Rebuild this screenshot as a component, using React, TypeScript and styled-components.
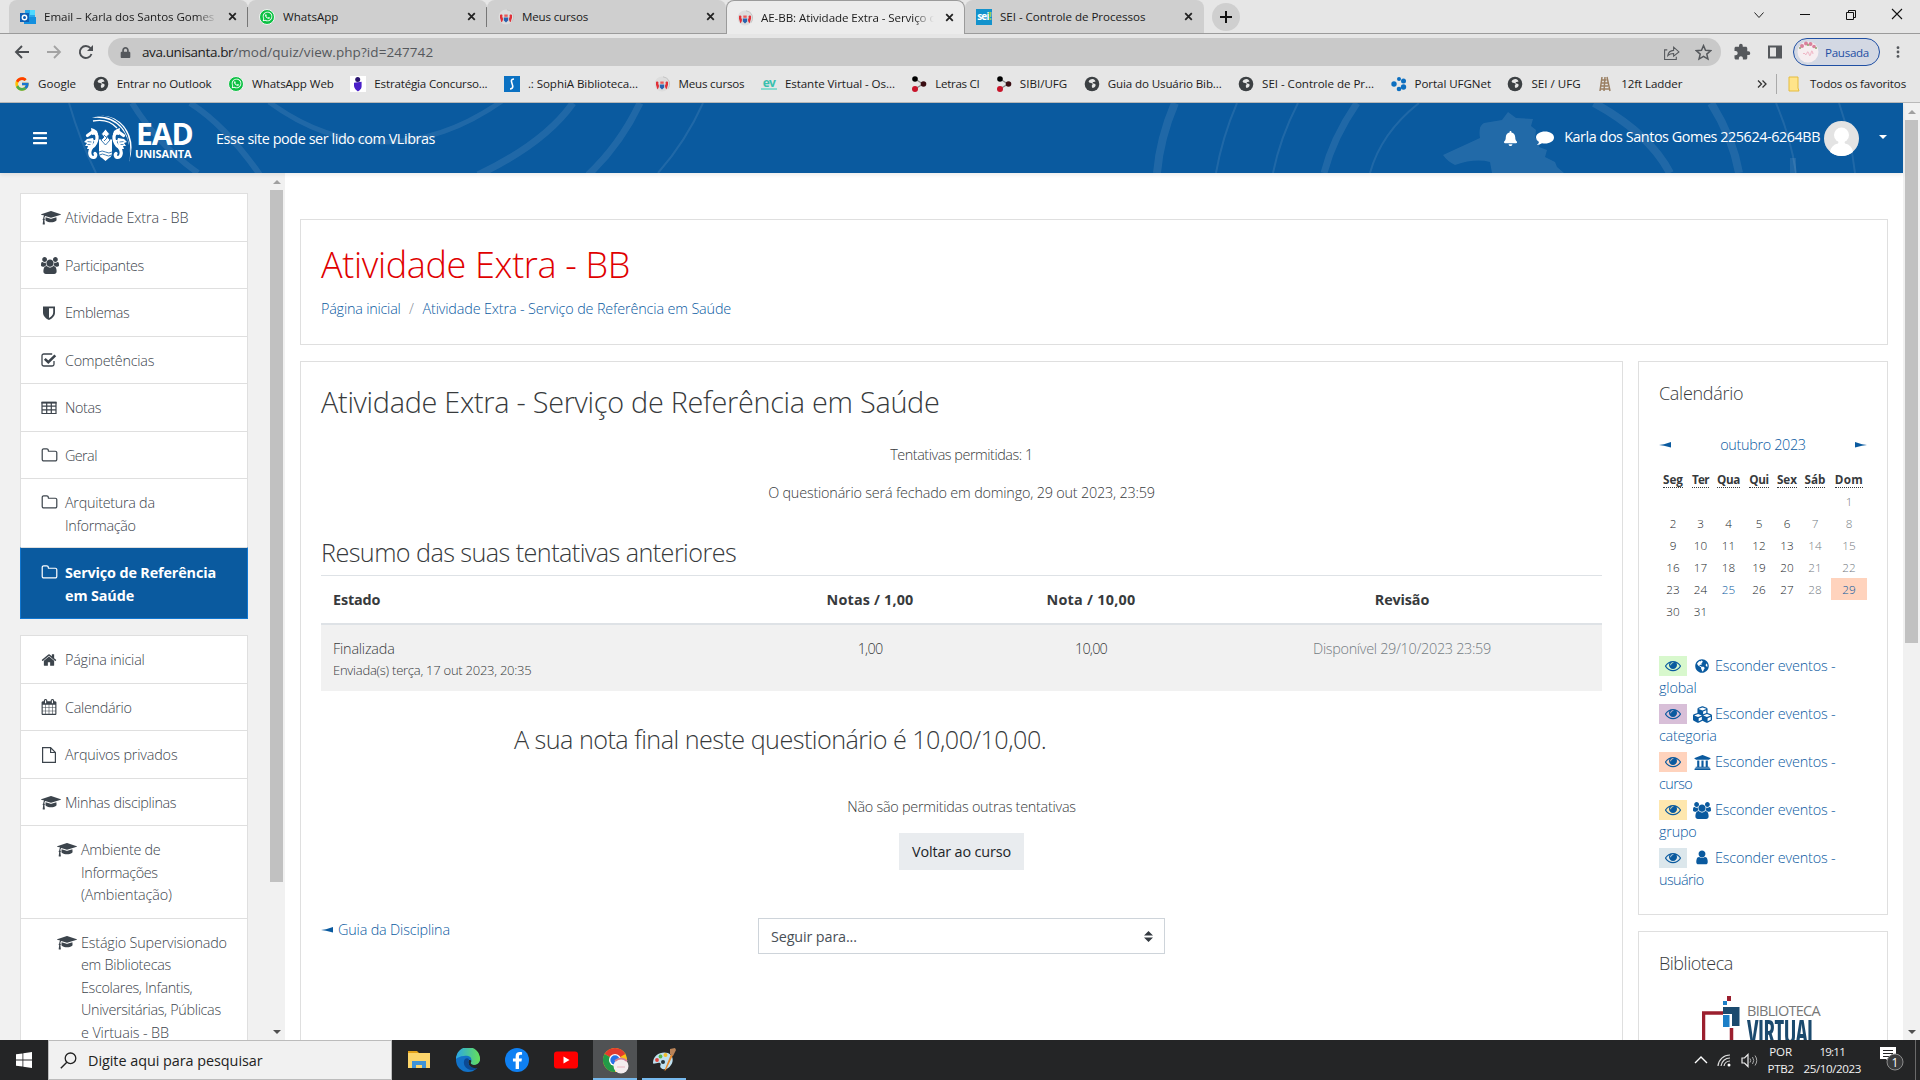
import React, { useLayoutEffect, useRef, useState } from 'react';
import styled, { createGlobalStyle, css } from 'styled-components';
import {
  FaBars, FaBell, FaCubes, FaUniversity, FaGlobeAmericas, FaWhatsapp, FaLock, FaFacebookF,
} from 'react-icons/fa';
import { MdExtension } from 'react-icons/md';
import { FcGoogle } from 'react-icons/fc';

const GlobalStyle = createGlobalStyle`
  * { box-sizing: border-box; }
  body { margin: 0; background: #fff; overflow: hidden; }
  svg { display: block; flex: none; }
`;

const BLUE = '#0a5a9f';
const LINE = '#dfdfdf';

/* ---------- text ---------- */

const Run = styled.span<{ $spacing: number }>`
  display: inline-block;
  justify-self: start;
  white-space: pre;
  letter-spacing: ${p => p.$spacing}px;
`;

/* A run of text whose tracking is adjusted so that it takes a given width. */
function Fit({ w, children }: { w: number; children: string }) {
  const ref = useRef<HTMLSpanElement>(null);
  const [spacing, setSpacing] = useState(0);
  useLayoutEffect(() => {
    if (ref.current) setSpacing((w - ref.current.offsetWidth) / children.length);
  }, [w, children]);
  return <Run ref={ref} $spacing={spacing}>{children}</Run>;
}

/* ---------- icons ---------- */

const Svg = ({ s = 16, h, vb = '0 0 16 16', children }: any) => (
  <svg width={s} height={h ?? s} viewBox={vb} fill="currentColor">{children}</svg>
);

const GradCap = () => (
  <Svg s={20} h={15} vb="0 0 2304 1728"><path d="M1774 836l18 316q4 69-82 128t-235 93.5-323 34.5-323-34.5-235-93.5-82-128l18-316 574 181q22 7 48 7t48-7zm530-324q0 23-22 31l-1120 352q-4 1-10 1t-10-1l-652-206q-43 34-71 111.5t-34 178.5q63 36 63 109 0 69-58 107l58 433q2 14-8 25-9 11-24 11h-192q-15 0-24-11-10-11-8-25l58-433q-58-38-58-107 0-73 65-111 11-207 98-330l-333-104q-22-8-22-31t22-31l1120-352q4-1 10-1t10 1l1120 352q22 8 22 31z" /></Svg>
);
const UsersIcon = () => (
  <Svg s={18} h={17} vb="0 0 1920 1792"><path d="M593 896q-162 5-265 128h-134q-82 0-138-40.5t-56-118.5q0-353 124-353 6 0 43.5 21t97.5 42.5 119 21.5q67 0 133-23-5 37-5 66 0 139 81 256zm1071 637q0 120-73 189.5t-194 69.5h-874q-121 0-194-69.5t-73-189.5q0-53 3.5-103.5t14-109 26.5-108.5 43-97.5 62-81 85.500-53.5 111.5-20q10 0 43 21.5t73 48 107 48 135 21.5 135-21.5 107-48 73-48 43-21.5q61 0 111.5 20t85.500 53.5 62 81 43 97.5 26.500 108.5 14 109 3.500 103.5zm-1024-1277q0 106-75 181t-181 75-181-75-75-181 75-181 181-75 181 75 75 181zm704 384q0 159-112.5 271.5t-271.5 112.5-271.5-112.5-112.5-271.5 112.5-271.5 271.5-112.5 271.5 112.5 112.5 271.5zm576 225q0 78-56 118.5t-138 40.5h-134q-103-123-265-128 81-117 81-256 0-29-5-66 66 23 133 23 59 0 119-21.5t97.5-42.5 43.500-21q124 0 124 353zm-128-609q0 106-75 181t-181 75-181-75-75-181 75-181 181-75 181 75 75 181z" /></Svg>
);
const UserIcon = () => (
  <Svg s={16} vb="0 60 1792 1792"><path d="M1536 1399q0 109-62.5 187t-150.5 78h-854q-88 0-150.5-78t-62.5-187q0-85 8.5-160.5t31.5-152 58.5-131 94-89 134.5-34.5q131 128 313 128t313-128q76 0 134.5 34.5t94 89 58.5 131 31.5 152 8.5 160.5zm-256-887q0 159-112.5 271.5t-271.5 112.5-271.5-112.5-112.5-271.5 112.5-271.5 271.5-112.5 271.5 112.5 112.5 271.5z" /></Svg>
);
const ShieldIcon = () => <Svg><path d="M2 1.500h12v6c0 4-3.500 6.300-6 7.500-2.500-1.200-6-3.500-6-7.500zM8 3.300v9.600c2-1.100 4.200-2.600 4.200-5.400V3.300z" fillRule="evenodd" /></Svg>;
const HomeIcon = () => (
  <Svg vb="0 0 1792 1792"><path d="M1472 992v480q0 26-19 45t-45 19h-384v-384h-256v384h-384q-26 0-45-19t-19-45v-480q0-1 .5-3t.5-3l575-474 575 474q1 2 1 6zm223-69l-62 74q-8 9-21 11h-3q-13 0-21-7l-692-577-692 577q-12 8-24 7-13-2-21-11l-62-74q-8-10-7-23.5t11-21.5l719-599q32-26 76-26t76 26l244 204v-195q0-14 9-23t23-9h192q14 0 23 9t9 23v408l219 182q10 8 11 21.5t-7 23.5z" /></Svg>
);
const FolderIcon = () => (
  <Svg s={17} h={17} vb="0 0 1792 1792"><path d="M1600 1312v-704q0-40-28-68t-68-28h-704q-40 0-68-28t-28-68v-64q0-40-28-68t-68-28h-320q-40 0-68 28t-28 68v960q0 40 28 68t68 28h1216q40 0 68-28t28-68zm128-704v704q0 92-66 158t-158 66h-1216q-92 0-158-66t-66-158v-960q0-92 66-158t158-66h320q92 0 158 66t66 158v32h672q92 0 158 66t66 158z" /></Svg>
);
const CalendarIcon = () => (
  <Svg s={16} h={16} vb="0 0 1792 1792"><path d="M192 1664h288v-288h-288v288zm352 0h320v-288h-320v288zm-352-352h288v-320h-288v320zm352 0h320v-320h-320v320zm-352-384h288v-288h-288v288zm736 736h320v-288h-320v288zm-384-736h320v-288h-320v288zm768 736h288v-288h-288v288zm-384-352h320v-320h-320v320zm-352-864v-288q0-13-9.5-22.5t-22.5-9.5h-64q-13 0-22.5 9.5t-9.5 22.5v288q0 13 9.5 22.5t22.5 9.5h64q13 0 22.5-9.5t9.5-22.5zm736 864h288v-320h-288v320zm-384-384h320v-288h-320v288zm384 0h288v-288h-288v288zm32-480v-288q0-13-9.5-22.5t-22.5-9.5h-64q-13 0-22.5 9.5t-9.5 22.5v288q0 13 9.5 22.5t22.5 9.5h64q13 0 22.5-9.5t9.5-22.5zm384-64v1280q0 52-38 90t-90 38h-1408q-52 0-90-38t-38-90v-1280q0-52 38-90t90-38h128v-96q0-66 47-113t113-47h64q66 0 113 47t47 113v96h384v-96q0-66 47-113t113-47h64q66 0 113 47t47 113v96h128q52 0 90 38t38 90z" /></Svg>
);
const EyeIcon = () => (
  <Svg s={16} vb="0 60 1792 1792"><path d="M1664 960q-152-236-381-353 61 104 61 225 0 185-131.5 316.5t-316.5 131.5-316.5-131.5-131.5-316.5q0-121 61-225-229 117-381 353 133 205 333.5 326.5t434.5 121.5 434.5-121.5 333.5-326.5zm-720-384q0-20-14-34t-34-14q-125 0-214.5 89.5t-89.5 214.5q0 20 14 34t34 14 34-14 14-34q0-86 61-147t147-61q20 0 34-14t14-34zm848 384q0 34-20 69-140 230-376.5 368.5t-499.5 138.5-499.5-139-376.5-368q-20-35-20-69t20-69q140-229 376.5-368t499.5-139 499.5 139 376.5 368q20 35 20 69z" /></Svg>
);
const CheckIcon = () => (
  <Svg><g fill="none" stroke="currentColor"><path d="M13 9v3.2a1.8 1.8 0 0 1-1.8 1.8H2.8A1.8 1.8 0 0 1 1 12.2V3.8A1.8 1.8 0 0 1 2.8 2h8.4" strokeWidth="1.3" /><path d="M3.800 6.800L7.300 10.200L14.300 3.300" strokeWidth="2.5" /></g></Svg>
);
const TableIcon = () => (
  <Svg><path fill="none" stroke="currentColor" strokeWidth="1.2" d="M1 2.500h14v11H1zM1 6.200h14M1 9.800h14M5.700 3v10.500M10.300 3v10.500" /><path d="M.5 1.600h15v2H.5z" /></Svg>
);
const FileIcon = () => <Svg s={16}><path fill="none" stroke="currentColor" strokeWidth="1.2" d="M1.600.7h8l4.800 4.800v9.800H1.600zM9.600.7v4.800h4.800" /></Svg>;

const GlobeFav = () => (
  <Svg><circle cx="8" cy="8" r="7.3" fill="#3c4043" /><path d="M8.600 3c-2 0-3.600 1-4 2.600.6 1.600 2.200 1.400 3.400 1.600.9.200.7 1.500 0 2-.6.600.2 1.500 0 2.600 1.500.3 3.200-.7 3.600-2.300.3-1.200-.8-1.900-2-2-1-.1-1.300-1-.4-1.500.8-.4 1.700-.1 2.300-.6C11 4 10 3 8.600 3z" fill="#e6e6e6" /></Svg>
);
const WaBadge = styled.span`
  display: flex; align-items: center; justify-content: center;
  width: 16px; height: 16px; border-radius: 50%;
  background: #0cc143; color: #fff; border: 1px solid #f4f4f4;
`;
const WaFav = () => <WaBadge><FaWhatsapp size={11} /></WaBadge>;
const CrestFav = () => (
  <Svg><circle cx="8" cy="8" r="7.5" fill="#ddd" /><path d="M9 .8a7.300 7.300 0 0 1 5 12" stroke="#c4c4c4" fill="none" /><path d="M2 6c2-1 3 0 2.200 2 1.400 1 .8 4-.6 5.200C2.500 12 2.800 10 2 9zM14 6c-2-1-3 0-2.200 2-1.400 1-.8 4 .6 5.200 1.100-1.200.8-3.200 1.600-4.200z" fill="#e03038" /><path d="M6.300 5.500h3.400v2.300H6.300z" fill="#e85a5a" /><path d="M5.800 8.500h4.400v3L8 13.500l-2.200-2z" fill="#2a62ad" /></Svg>
);
const OutlookFav = () => (
  <Svg><path fill="#28a8ea" d="M5 1h10v10H5z" /><path fill="#50d9ff" d="M10 1h5v5h-5z" /><path fill="#1490df" d="M4 8h12v7H4z" /><path fill="#0f5fb4" d="M0 4h9v9H0z" /><circle cx="4.500" cy="8.500" r="2.200" fill="none" stroke="#fff" strokeWidth="1.4" /></Svg>
);
const FavText = styled.span<{ $bg?: string; $fg: string; $size: number; $under?: boolean }>`
  display: flex; align-items: center; justify-content: center; flex: none;
  width: 16px; height: ${p => (p.$under ? 13 : 16)}px; overflow: hidden;
  background: ${p => p.$bg ?? 'transparent'}; color: ${p => p.$fg};
  font: 700 ${p => p.$size}px/11px "Open Sans", sans-serif; letter-spacing: -0.8px;
  ${p => p.$under && css`border-bottom: 2px solid #8ad9ce;`}
  b { color: #8fd14f; }
`;
const SeiFav = () => <FavText $bg="#1292cc" $fg="#fff" $size={10}>sei<b>!</b></FavText>;
const EvFav = () => <FavText $fg="#39c0ae" $size={12} $under>ev</FavText>;
const EstFav = () => <Svg><path fill="#fff" d="M0 0h16v16H0z" /><circle cx="7.700" cy="3.500" r="2.500" fill="#2a1570" /><path fill="#4a1fc8" d="M4 6.800l7.600-1v4.500c0 3-2.400 4.200-3.600 5.200C6.500 14.500 4 12 4 10z" /></Svg>;
const SophiaFav = () => <Svg><path fill="#0a71c2" d="M0 0h16v16H0z" /><path d="M10 3C7 3 7 5 8 7.500S9.500 13 6 13" stroke="#fff" strokeWidth="1.6" fill="none" /></Svg>;
const NodesFav = () => <Svg><path d="M4 3l8 5-8 5" stroke="#888" strokeWidth="1.3" fill="none" /><circle cx="4" cy="3" r="2.8" fill="#000" /><circle cx="12.500" cy="8" r="2.800" fill="#3a0d12" /><circle cx="4" cy="13" r="3" fill="#c8142a" /></Svg>;
const PortalFav = () => <Svg><g fill="#0d6fc0"><circle cx="3" cy="8" r="2.7" /><circle cx="8" cy="13" r="2.3" /><circle cx="12.500" cy="11" r="2.7" /><circle cx="12.500" cy="5" r="2.5" /><circle cx="8" cy="3" r="2" /></g></Svg>;
const LadderFav = () => <Svg><g stroke="#9a7f62" strokeWidth="1.5" fill="none"><path d="M5 1L3 15M8 1L7 15M10 1l3 14M4.500 4h5M4 7h7M4 10h7M3 13h9" /></g></Svg>;
const FolderFav = () => <Svg><path d="M3 1h9v11l1 3H3z" fill="#ffe48a" stroke="#e5bc3e" /></Svg>;

/* ---------- browser chrome ---------- */

const Screen = styled.div`
  width: 1920px; height: 1080px; overflow: hidden;
  display: flex; flex-direction: column;
  font-family: "Open Sans", "Noto Sans", sans-serif;
  color: #373a3c;
`;
const Chrome = styled.div`
  height: 103px; flex: none; background: #e6e6e6; border-bottom: 1px solid #b9b9b9;
  font-size: 11.6px; color: #1b1b1b;
`;
const TabStrip = styled.div`
  display: flex; height: 34px; border-bottom: 1px solid #9b9b9b; padding-left: 9px;
`;
const Tab = styled.div<{ $w: number; $active?: boolean; $sep?: boolean }>`
  display: flex; align-items: center; flex: none;
  width: ${p => p.$w}px; height: ${p => (p.$active ? 34 : 33)}px;
  padding: 0 8px 0 11px; gap: 8px;
  border-radius: 8px 8px 0 0;
  background: #cfcfcf;
  ${p => p.$active && css`background: #ececec; border: 1px solid #9b9b9b; border-bottom: 0; padding: 0 7px 0 10px;`}
  ${p => p.$sep && css`
    background: linear-gradient(#777, #777) right 7px / 1px 20px no-repeat, #cfcfcf;
  `}
`;
const TabTitle = styled.span<{ $fade?: boolean }>`
  flex: 1; overflow: hidden; white-space: nowrap;
  ${p => p.$fade && css`mask-image: linear-gradient(90deg, #000 88%, transparent);`}
`;
const NewTab = styled.span`
  display: flex; align-items: center; justify-content: center;
  width: 28px; height: 28px; margin: 3px 0 0 8px; border-radius: 50%; background: #cfcfcf; color: #111;
`;
const WindowButtons = styled.div`
  display: flex; margin-left: auto; padding: 7px 15px 0 0; gap: 30px; color: #111;
`;
const CloseX = () => <Svg s={15} vb="0 0 16 16"><path d="M4.500 4.500l7 7M11.500 4.500l-7 7" stroke="#222" strokeWidth="1.9" /></Svg>;

const Toolbar = styled.div`
  display: flex; align-items: center; height: 36px; padding: 0 13px 0 14px; color: #55585c;
`;
const NavButtons = styled.div`display: flex; gap: 16px; width: 94px; flex: none;`;
const Omnibox = styled.div`
  display: flex; align-items: center; width: 1613px; flex: none; height: 28px; border-radius: 14px;
  background: #c9c9c9; padding: 0 9px 0 12px; font-size: 13.5px; color: #55585c;
  b { font-weight: 400; color: #1b1b1b; }
`;
const UrlText = styled.span`margin-left: 11px; flex: 1;`;
const ToolIcons = styled.div`display: flex; align-items: center; gap: 16px; padding: 0 10px 0 12px;`;
const OmniIcons = styled.div`display: flex; gap: 15px;`;
const ProfilePill = styled.div`
  display: flex; align-items: center; gap: 6px; width: 87px; height: 28px; margin-right: 11px; padding-left: 3px;
  border: 1.5px solid #1f4fa3; border-radius: 14px; background: #d3d8e3; color: #1f4fa3;
`;
const Karla = () => (
  <Svg s={22} vb="0 0 22 22"><circle cx="11" cy="11" r="10.5" fill="#f6eef0" /><g fill="#d9809b"><circle cx="5" cy="5" r="2" /><circle cx="9" cy="2.6" r="2" /><circle cx="13.500" cy="3" r="2" /><circle cx="17" cy="5.500" r="1.800" /></g><g fill="#8aa36b"><circle cx="3" cy="7" r="1" /><circle cx="11" cy="4" r="1" /><circle cx="19" cy="7" r="1" /></g><path d="M6 13q1-2 2 0t2-1 2 1 2-1 2 1" stroke="#efb5c5" fill="none" /></Svg>
);
const Bookmarks = styled.div`
  display: flex; align-items: center; height: 27px; padding-left: 14px; gap: 16.5px;
`;
const Bookmark = styled.span`display: flex; align-items: center; gap: 8px;`;
const AllBookmarks = styled.div`
  display: flex; align-items: center; margin-left: auto; padding-right: 14px; gap: 9px;
  i { width: 1px; height: 20px; background: #aaa; }
`;

const marks: [React.FC, string, number][] = [
  [() => <FcGoogle size={16} />, 'Google', 38], [GlobeFav, 'Entrar no Outlook', 95], [WaFav, 'WhatsApp Web', 82],
  [EstFav, 'Estratégia Concurso...', 113], [SophiaFav, '.: SophiA Biblioteca...', 110], [CrestFav, 'Meus cursos', 66],
  [EvFav, 'Estante Virtual - Os...', 110], [NodesFav, 'Letras CI', 44], [NodesFav, 'SIBI/UFG', 47],
  [GlobeFav, 'Guia do Usuário Bib...', 114], [GlobeFav, 'SEI - Controle de Pr...', 112], [PortalFav, 'Portal UFGNet', 76],
  [GlobeFav, 'SEI / UFG', 49], [LadderFav, '12ft Ladder', 61],
];

function BrowserChrome() {
  return (
    <Chrome>
      <TabStrip>
        <Tab $w={239} $sep><OutlookFav /><TabTitle $fade><Fit w={170}>Email – Karla dos Santos Gomes</Fit></TabTitle><CloseX /></Tab>
        <Tab $w={239} $sep><WaFav /><TabTitle><Fit w={55}>WhatsApp</Fit></TabTitle><CloseX /></Tab>
        <Tab $w={239}><CrestFav /><TabTitle><Fit w={66}>Meus cursos</Fit></TabTitle><CloseX /></Tab>
        <Tab $w={239} $active><CrestFav /><TabTitle $fade><Fit w={182}>AE-BB: Atividade Extra - Serviço de</Fit></TabTitle><CloseX /></Tab>
        <Tab $w={239}><SeiFav /><TabTitle><Fit w={145}>SEI - Controle de Processos</Fit></TabTitle><CloseX /></Tab>
        <NewTab><Svg s={14} vb="0 0 14 14"><path d="M7 1v12M1 7h12" stroke="#111" strokeWidth="2" /></Svg></NewTab>
        <WindowButtons>
          <Svg><path d="M3.500 5.500l4.500 5 4.500-5" fill="none" stroke="#222" /></Svg>
          <Svg><path d="M3 7.500h10" stroke="#111" /></Svg>
          <Svg><path d="M3.500 5.500h7v7h-7zM5.500 5.500v-2h7v7h-2" fill="none" stroke="#111" /></Svg>
          <Svg><path d="M3 2l10 10M13 2L3 12" stroke="#111" strokeWidth="1.1" /></Svg>
        </WindowButtons>
      </TabStrip>
      <Toolbar>
        <NavButtons>
          <Svg><path d="M15 8H2M8 2L2 8l6 6" fill="none" stroke="#4c4f53" strokeWidth="1.9" /></Svg>
          <Svg><path d="M1 8h13M8 2l6 6-6 6" fill="none" stroke="#a3a3a3" strokeWidth="1.8" /></Svg>
          <Svg><path d="M13.500 10a6 6 0 1 1-1-5.800" fill="none" stroke="#4c4f53" strokeWidth="1.9" /><path d="M15 1v6H9z" fill="#4c4f53" /></Svg>
        </NavButtons>
        <Omnibox>
          <FaLock size={11} />
          <UrlText><b><Fit w={91}>ava.unisanta.br</Fit></b><Fit w={200}>/mod/quiz/view.php?id=247742</Fit></UrlText>
          <OmniIcons>
            <Svg s={17}><path d="M4 5.500H1.500v9h11V12" fill="none" stroke="#55585c" /><path d="M4.500 11c.5-3 2.500-4.800 5.500-5V3l5 4.500-5 4V9c-2.500 0-4 .5-5.500 2z" fill="none" stroke="#55585c" /></Svg>
            <Svg s={17}><path d="M8 1.500l1.900 4.400 4.800.4-3.600 3.200 1.100 4.700L8 11.700l-4.200 2.500 1.100-4.700L1.300 6.300l4.800-.4z" fill="none" stroke="#55585c" strokeWidth="1.4" /></Svg>
          </OmniIcons>
        </Omnibox>
        <ToolIcons>
          <MdExtension size={18} />
          <Svg><path d="M2 2.500h12v11H2z" fill="none" stroke="#55585c" strokeWidth="2" /><path d="M9 3h5v10H9z" /></Svg>
        </ToolIcons>
        <ProfilePill><Karla /><Fit w={44}>Pausada</Fit></ProfilePill>
        <Svg s={14} vb="0 0 14 16"><circle cx="7" cy="3" r="1.6" /><circle cx="7" cy="8" r="1.6" /><circle cx="7" cy="13" r="1.6" /></Svg>
      </Toolbar>
      <Bookmarks>
        {marks.map(([Icon, label, w]) => <Bookmark key={label}><Icon /><Fit w={w}>{label}</Fit></Bookmark>)}
        <AllBookmarks>
          <Svg s={10} vb="0 0 10 10"><path d="M1 1.500L4.500 5 1 8.500M5.500 1.500L9 5 5.500 8.500" stroke="#333" strokeWidth="1.3" fill="none" /></Svg>
          <i /><Bookmark><FolderFav /><Fit w={96}>Todos os favoritos</Fit></Bookmark>
        </AllBookmarks>
      </Bookmarks>
    </Chrome>
  );
}

/* ---------- site header ---------- */

const Viewport = styled.div`display: flex; height: 937px; flex: none;`;
const Site = styled.div`width: 1903px; display: flex; flex-direction: column;`;
const Navbar = styled.header`
  position: relative; display: flex; align-items: center; height: 70px; flex: none; background: ${BLUE};
  padding: 0 16px 0 32px; color: #fff; font-size: 14.4px; box-shadow: 0 2px 4px rgba(0,0,0,.08);
  > * { position: relative; }
`;
const Backdrop = styled.svg`&& { position: absolute; } left: 0; top: 0;`;
const Logo = styled.div`display: flex; align-items: center; width: 132px; margin: 0 0 0 36px;`;
const VLibras = styled.span`flex: 1;`;
const UserMenu = styled.div`display: flex; align-items: center;`;
const UserName = styled.span`margin: -3px 4px 0 10px;`;
const Avatar = () => <Svg s={35} vb="0 0 35 35"><circle cx="17.500" cy="17.500" r="17.500" fill="#e3e3e3" /><circle cx="17.500" cy="14" r="7.500" fill="#fff" /><path d="M6 31q1-7 8-8.500l1-3h5l1 3q7 1.500 8 8.500-5 4-11.500 4T6 31z" fill="#fff" /></Svg>;
const Caret = styled.span`
  margin: -3px 0 0 20px; border: 4px solid transparent; border-top-color: #fff; border-bottom: 0;
`;

function HeaderArt() {
  return (
    <Backdrop width="1903" height="70" viewBox="0 0 1903 70">
      <g fill="none" stroke="#fff" strokeOpacity=".09">
        <path d="M69 0Q80 38 96 70M703 0Q686 38 658 70M1237 0q-15 35-21 70M1298 0q-18 35-25 70M1419 0q-38 30-49 70M1776 0q15 35 20 70M1839 0q12 35 16 70" strokeWidth="2" />
        <path d="M132 0Q158 42 198 70M190 0Q225 22 260 72" strokeWidth="6" />
        <path d="M269 -1Q325 40 385 39T502 -2" strokeWidth="5" />
        <path d="M573 0Q545 40 478 72M640 0Q620 42 588 72M1357 0q-24 35-33 70" strokeWidth="7" />
        <path d="M1175 0q-15 35-18 70M1594 0q55 30 76 70M1711 0q22 35 28 70" strokeWidth="8" />
        <path d="M1793 55v16" strokeWidth="6" />
      </g>
      <path fill="#fff" fillOpacity=".1" d="M1443 52l37-17q-2-12 4-15l18-3 6-8 8 6 17 1-2 7 5 4-1 8 5 1-1 8 8 3-2 7 10 5 2 5 7 6h-72l-2-11q-15-4-35 3-8-4-12-10z" />
    </Backdrop>
  );
}

const LogoWords = styled.div`
  display: flex; flex-direction: column; margin: 7px 0 0 -1px;
  b { font: 700 30px/24px "Open Sans", sans-serif; margin-left: -1px; }
  small { font: 700 11px/15px "Open Sans", sans-serif; margin-left: -2px; }
`;
function Seahorse() {
  return (
    <g>
      <path d="M3.500 22.500L9 18.500q4.500 2 4 7t-4.500 8q-3.500 4-2.500 8t5 2.500q1.500-2 0-3.500" fill="none" stroke="#fff" strokeWidth="3.2" strokeLinecap="round" />
      <path d="M7 15l3 1 3 2 1 3-6 1zM9 25l-6 1-3 3 3 1-2 3 3 0-1 3 4 0 4-5zM10 27l4 0-3 7-4 2z" fill="#fff" />
      <path d="M3.500 28.500l4 .5M3.500 31.500h3" stroke={BLUE} strokeWidth=".7" />
    </g>
  );
}
function EadLogo() {
  return (
    <Logo>
      <Svg s={54} h={50} vb="0 0 54 50">
        <path d="M8 5Q26-2 40 13q12 15 5 36 3-22-8-34Q26 3 8 5z" fill="#fff" />
        <path d="M12 3q18-1 28 13 8 12 5 31" fill="none" stroke={BLUE} strokeWidth="1.1" />
        <path d="M9 8q15-3 24 7" fill="none" stroke="#fff" strokeWidth="1.3" />
        <Seahorse />
        <g transform="translate(43 0) scale(-1 1)"><Seahorse /></g>
        <path d="M15 26.500h13v12.500q0 5-3 6l-3.500 3-3.500-3q-3-1-3-6z" fill="#fff" />
        <path d="M15 39q3-2 6.500 0t6.500 0M15.500 42q3-2 6 0t6 0" stroke={BLUE} fill="none" strokeWidth=".8" />
        <path d="M21.500 16l4 5-2.500 2.500 3 3.500-4.500 5-4.500-5 3-3-2.500-3z" fill="#fff" stroke={BLUE} strokeWidth=".8" />
        <path d="M20 22l3 3-3 3" stroke={BLUE} fill="none" strokeWidth=".8" />
      </Svg>
      <LogoWords><b><Fit w={57}>EAD</Fit></b><small><Fit w={56}>UNISANTA</Fit></small></LogoWords>
    </Logo>
  );
}

/* ---------- sidebar ---------- */

const Body = styled.div`display: flex; flex: 1; min-height: 0;`;
const Sidebar = styled.aside`
  display: flex; width: 285px; flex: none; background: #f1f1f1; height: 867px; overflow: hidden;
`;
const NavColumn = styled.nav`width: 268px; padding: 20px 20px 0; display: flex; flex-direction: column; gap: 16px;`;
const NavGroup = styled.div`border: 1px solid ${LINE}; background: #fff; flex: none;`;
const NavItem = styled.div<{ $active?: boolean; $nested?: boolean }>`
  display: grid; grid-template-columns: 24px 1fr;
  padding: 13px 0 11px ${p => (p.$nested ? 36 : 20)}px;
  font-size: 14.4px; line-height: 22.5px; font-weight: 300; color: #3c444c;
  & + & { border-top: 1px solid ${LINE}; }
  ${p => p.$active && css`
    && { margin: -1px -1px -1px; padding-top: 14px; padding-left: 20px; border: 1px solid #1177d1; }
    background: ${BLUE}; color: #fff; font-weight: 700;
  `}
  > span:first-child { height: 21px; display: flex; align-items: center; }
`;
const Lines = styled.span`display: flex; flex-direction: column; align-items: flex-start;`;

type Item = { icon: React.FC; lines: [string, number][]; active?: boolean; nested?: boolean };
const groups: Item[][] = [
  [
    { icon: GradCap, lines: [['Atividade Extra - BB', 123]] },
    { icon: UsersIcon, lines: [['Participantes', 79]] },
    { icon: ShieldIcon, lines: [['Emblemas', 64]] },
    { icon: CheckIcon, lines: [['Competências', 89]] },
    { icon: TableIcon, lines: [['Notas', 36]] },
    { icon: FolderIcon, lines: [['Geral', 32]] },
    { icon: FolderIcon, lines: [['Arquitetura da', 90], ['Informação', 71]] },
    { icon: FolderIcon, lines: [['Serviço de Referência', 151], ['em Saúde', 69]], active: true },
  ],
  [
    { icon: HomeIcon, lines: [['Página inicial', 80]] },
    { icon: CalendarIcon, lines: [['Calendário', 67]] },
    { icon: FileIcon, lines: [['Arquivos privados', 112]] },
    { icon: GradCap, lines: [['Minhas disciplinas', 111]] },
    { icon: GradCap, nested: true, lines: [['Ambiente de', 80], ['Informações', 77], ['(Ambientação)', 91]] },
    { icon: GradCap, nested: true, lines: [['Estágio Supervisionado', 146], ['em Bibliotecas', 90], ['Escolares, Infantis,', 111], ['Universitárias, Públicas', 140], ['e Virtuais - BB', 88]] },
  ],
];

const Scrollbar = styled.div`
  display: flex; flex-direction: column; align-items: center; width: 17px; flex: none;
  background: #f1f1f1; padding: 7px 0 6px; justify-content: space-between;
`;
const Thumb = styled.div<{ $h: number }>`width: 13px; height: ${p => p.$h}px; background: #c1c1c1; margin: 6px 0 auto;`;
const Up = styled.i`border: 4px solid transparent; border-bottom-color: #a0a0a0; border-top: 0;`;
const Down = styled.i`border: 4px solid transparent; border-top-color: #505050; border-bottom: 0;`;

function Side() {
  return (
    <Sidebar>
      <NavColumn>
        {groups.map((g, i) => (
          <NavGroup key={i}>
            {g.map(({ icon: Icon, lines, active, nested }) => (
              <NavItem key={lines[0][0]} $active={active} $nested={nested}>
                <span><Icon /></span>
                <Lines>{lines.map(([t, w]) => <Fit key={t} w={w}>{t}</Fit>)}</Lines>
              </NavItem>
            ))}
          </NavGroup>
        ))}
      </NavColumn>
      <Scrollbar><Up /><Thumb $h={692} /><Down /></Scrollbar>
    </Sidebar>
  );
}

/* ---------- main content ---------- */

const Content = styled.main`
  flex: 1; padding: 46px 15px 0; display: flex; flex-direction: column; gap: 16px; overflow: hidden;
  font-size: 14.4px; line-height: 22px; font-weight: 300;
`;
const Card = styled.section`border: 1px solid ${LINE}; background: #fff; flex: none;`;
const CourseCard = styled(Card)`height: 126px; padding: 21.5px 20px 0;`;
const CourseTitle = styled.h1`margin: 0; font-weight: 300; font-size: 36px; line-height: 45px; color: #e00000;`;
const Crumbs = styled.div`
  display: flex; gap: 8.5px; margin-top: 11.5px; color: ${BLUE};
  i { font-style: normal; color: #868e96; }
`;
const Columns = styled.div`display: flex; gap: 15px; align-items: flex-start;`;
const QuizCard = styled(Card)`width: 1323px; height: 760px; padding: 21.5px 20px 0;`;
const Title = styled.h2`margin: 0; font-weight: 300; font-size: 28.8px; line-height: 36px;`;
const Info = styled.p<{ $top: number }>`margin: ${p => p.$top}px 0 0; text-align: center;`;
const Subtitle = styled.h3<{ $top: number; $left?: number }>`
  margin: ${p => p.$top}px 0 0 ${p => p.$left ?? 0}px; font-weight: 300; font-size: 25.2px; line-height: 32px;
`;
const row = css`display: grid; grid-template-columns: 439px 220px 222px 1fr; text-align: center;`;
const HeadRow = styled.div`
  ${row} margin-top: 7px; height: 50px; border-top: 1px solid #dee2e6; border-bottom: 2px solid #dee2e6;
  padding-top: 13px; font-weight: 700;
`;
const DataRow = styled.div`${row} height: 66px; padding-top: 13px; background: #f1f1f1;`;
const FirstCell = styled.div`text-align: left; padding-left: 12px; small { display: block; font-size: 13px; line-height: 20px; }`;
const Muted = styled.div`color: #737b82;`;
const BackButton = styled.button`
  display: block; width: 125px; height: 37px; margin: 15.5px auto 0; padding: 0; border: 0; background: #e9ecef;
  font: 400 14.4px "Open Sans", sans-serif; color: #212529;
`;
const FooterNav = styled.div`display: grid; grid-template-columns: 437px 407px 1fr; margin-top: 48px;`;
const PrevLink = styled.a`display: flex; gap: 5px; padding-top: 1px; color: ${BLUE};`;
const Select = styled.div`
  display: flex; align-items: center; justify-content: space-between; height: 36px; padding: 1px 11px 0 12px;
  border: 1px solid #ced4da; font-weight: 400; color: #495057;
`;
const PrevArrow = () => <Svg s={12} h={22} vb="0 0 12 22"><path d="M0 11l5-.7L12 8v5.500L5 11.700z" /></Svg>;
const NextArrow = () => <Svg s={12} h={22} vb="0 0 12 22"><path d="M12 11l-5-.7L0 8v5.500l7-1.800z" /></Svg>;

/* ---------- blocks column ---------- */

const Blocks = styled.div`width: 250px; display: flex; flex-direction: column; gap: 16px;`;
const CalendarBlock = styled(Card)`height: 554px; padding: 18px 20px 0; color: ${BLUE};`;
const LibraryBlock = styled(Card)`height: 200px; padding: 18px 20px 0;`;
const BlockTitle = styled.h5`margin: 0; font-weight: 300; font-size: 18px; line-height: 26px; color: #373a3c;`;
const MonthNav = styled.div`display: flex; justify-content: space-between; margin-top: 28px; width: 208px;`;
const Month = styled.div`
  display: grid; grid-template-columns: 28px 27px 29px 32px 24px 32px 36px; grid-auto-rows: 22px;
  margin-top: 12px; width: 208px; font-size: 11.7px; text-align: center; color: #212529;
`;
const WeekDay = styled.span`
  font-weight: 700; font-size: 11.7px; color: #373a3c;
  span { border-bottom: 1px dotted #373a3c; line-height: 15px; }
`;
const Day = styled.span<{ $kind: string }>`
  color: ${p => (p.$kind === 'weekend' ? '#737b82' : p.$kind === 'plain' ? '#212529' : BLUE)};
  ${p => p.$kind === 'event' && css`background: #ffd3bd;`}
`;
const Legend = styled.div`margin-top: 33px; display: flex; flex-direction: column; gap: 4px;`;
const LegendItem = styled.div`
  display: grid; grid-template-columns: 28px 28px 1fr; line-height: 22px; align-items: center;
  > :last-child { grid-column: 1 / -1; }
`;
const Chip = styled.span<{ $c: string }>`
  display: flex; align-items: center; justify-content: center; height: 20px; background: ${p => p.$c};
`;
const LegendIcon = styled.span`display: flex; justify-content: center; padding-left: 2px;`;
const LibraryLogo = styled.div`display: flex; margin: 20px 0 0 43px;`;
const LibraryWords = styled.div`
  margin: 6px 0 0 7px; color: #777; font: 400 14.500px/17px "Open Sans", sans-serif;
`;
const Narrow = styled.b`
  display: block; width: 100px; margin-top: -4px; color: #1b4a6e;
  font-size: 33px; line-height: 34px; font-weight: 700; font-stretch: 75%;
  transform: scaleX(.68); transform-origin: left;
`;

const weekDays: [string, number][] = [['Seg', 20], ['Ter', 17], ['Qua', 23], ['Qui', 20], ['Sex', 20], ['Sáb', 21], ['Dom', 28]];
const kindOf = (d: number) => (d === 29 ? 'event' : d === 25 ? 'today' : d % 7 === 1 || d % 7 === 0 ? 'weekend' : 'plain');
const legend: [string, React.ReactNode, string, number][] = [
  ['#d8f8cd', <FaGlobeAmericas size={14} />, 'global', 38],
  ['#d8bfd8', <FaCubes size={19} />, 'categoria', 58],
  ['#ffd3bd', <FaUniversity size={17} />, 'curso', 33],
  ['#fee7ae', <UsersIcon />, 'grupo', 38],
  ['#dce7ec', <UserIcon />, 'usuário', 45],
];

function SideBlocks() {
  return (
    <Blocks>
      <CalendarBlock>
        <BlockTitle><Fit w={84}>Calendário</Fit></BlockTitle>
        <MonthNav><PrevArrow /><Fit w={85}>outubro 2023</Fit><NextArrow /></MonthNav>
        <Month>
          {weekDays.map(([d, w]) => <WeekDay key={d}><Fit w={w}>{d}</Fit></WeekDay>)}
          {[1, 2, 3, 4, 5, 6].map(k => <i key={k} />)}
          {Array.from({ length: 31 }, (_, i) => i + 1).map(d => <Day key={d} $kind={kindOf(d)}>{d}</Day>)}
        </Month>
        <Legend>
          {legend.map(([c, icon, label, w]) => (
            <LegendItem key={label}>
              <Chip $c={c}><EyeIcon /></Chip><LegendIcon>{icon}</LegendIcon>
              <Fit w={120}>Esconder eventos -</Fit><Fit w={w}>{label}</Fit>
            </LegendItem>
          ))}
        </Legend>
      </CalendarBlock>
      <LibraryBlock>
        <BlockTitle><Fit w={74}>Biblioteca</Fit></BlockTitle>
        <LibraryLogo>
          <Svg s={38} h={60} vb="0 0 38 60">
            <path d="M21 17H1.500v43M29.500 32v28" fill="none" stroke="#9b1f2e" strokeWidth="3.5" />
            <path d="M25 0h4v5h-4z" fill="#9b1f2e" /><path d="M21 5h4v4h-4zM21 19h6.500v12H21z" fill="#1c7fc8" />
            <path d="M21 11h16.500v19H30V18h-9z" fill="#1b4a6e" />
          </Svg>
          <LibraryWords><Fit w={73}>BIBLIOTECA</Fit><Narrow><Fit w={101}>VIRTUAL</Fit></Narrow></LibraryWords>
        </LibraryLogo>
      </LibraryBlock>
    </Blocks>
  );
}

function Main() {
  return (
    <Content>
      <CourseCard>
        <CourseTitle><Fit w={309}>Atividade Extra - BB</Fit></CourseTitle>
        <Crumbs><Fit w={80}>Página inicial</Fit><i>/</i><Fit w={309}>Atividade Extra - Serviço de Referência em Saúde</Fit></Crumbs>
      </CourseCard>
      <Columns>
        <QuizCard>
          <Title><Fit w={619}>Atividade Extra - Serviço de Referência em Saúde</Fit></Title>
          <Info $top={24.5}><Fit w={143}>Tentativas permitidas: 1</Fit></Info>
          <Info $top={16}><Fit w={387}>O questionário será fechado em domingo, 29 out 2023, 23:59</Fit></Info>
          <Subtitle $top={32}><Fit w={415}>Resumo das suas tentativas anteriores</Fit></Subtitle>
          <HeadRow>
            <FirstCell><Fit w={47}>Estado</Fit></FirstCell>
            <div><Fit w={87}>Notas / 1,00</Fit></div>
            <div><Fit w={89}>Nota / 10,00</Fit></div>
            <div><Fit w={54}>Revisão</Fit></div>
          </HeadRow>
          <DataRow>
            <FirstCell><Fit w={62}>Finalizada</Fit><small><Fit w={198}>Enviada(s) terça, 17 out 2023, 20:35</Fit></small></FirstCell>
            <div><Fit w={25}>1,00</Fit></div>
            <div><Fit w={32}>10,00</Fit></div>
            <Muted><Fit w={178}>Disponível 29/10/2023 23:59</Fit></Muted>
          </DataRow>
          <Subtitle $top={32} $left={193}><Fit w={532}>A sua nota final neste questionário é 10,00/10,00.</Fit></Subtitle>
          <Info $top={40.5}><Fit w={229}>Não são permitidas outras tentativas</Fit></Info>
          <BackButton><Fit w={99}>Voltar ao curso</Fit></BackButton>
          <FooterNav>
            <PrevLink><PrevArrow /><Fit w={112}>Guia da Disciplina</Fit></PrevLink>
            <Select>
              <Fit w={86}>Seguir para...</Fit>
              <Svg s={9} h={11} vb="0 0 9 11"><path d="M4.500 0L9 4.500H0zM4.500 11L0 6.500h9z" fill="#343a40" /></Svg>
            </Select>
          </FooterNav>
        </QuizCard>
        <SideBlocks />
      </Columns>
    </Content>
  );
}

/* ---------- taskbar ---------- */

const Taskbar = styled.footer`
  display: flex; height: 40px; flex: none; background: #242526; color: #f1f1f1; font-size: 11.6px;
`;
const Start = styled.div`width: 48px; display: flex; align-items: center; justify-content: center;`;
const Search = styled.div`
  display: flex; align-items: center; gap: 11px; width: 344px; padding-left: 11px;
  background: #f1f1f1; border: 1px solid #bcbcbc; color: #222; font-size: 14.4px;
`;
const Apps = styled.div`display: flex; padding-left: 5px; gap: 5px;`;
const AppButton = styled.div<{ $open?: boolean; $front?: boolean }>`
  display: flex; align-items: center; justify-content: center; width: 44px;
  ${p => p.$open && css`border-bottom: 2px solid #76b9ed; padding-top: 2px;`}
  ${p => p.$front && css`background: #505254;`}
`;
const FbDisc = styled.span`
  display: flex; align-items: flex-end; justify-content: center; width: 24px; height: 24px; border-radius: 50%;
  background: #0f80f2; padding-bottom: 3px; color: #fff;
`;
const Tray = styled.div`display: flex; align-items: center; margin-left: auto; gap: 9.5px;`;
const Stack = styled.div`display: flex; flex-direction: column; align-items: center; line-height: 17px;`;
const Desktop = styled.i`width: 1px; height: 40px; background: #6a6a6a; margin: 0 4px 0 0;`;

function WindowsBar() {
  return (
    <Taskbar>
      <Start><Svg><path fill="#fff" d="M0 2.300l6.500-.9v6.200H0zM7.300 1.300L16 0v7.600H7.300zM0 8.400h6.500v6.200L0 13.700zM7.300 8.400H16V16l-8.700-1.300z" /></Svg></Start>
      <Search>
        <Svg s={17} vb="0 0 17 17"><circle cx="10.500" cy="6.300" r="5.300" fill="none" stroke="#222" strokeWidth="1.3" /><path d="M6.800 10.200L.8 16.200" stroke="#222" strokeWidth="1.4" /></Svg>
        <Fit w={175}>Digite aqui para pesquisar</Fit>
      </Search>
      <Apps>
        <AppButton><Svg s={22} h={20} vb="0 0 22 20"><path fill="#e3a21a" d="M0 1h9l2 2H0z" /><path fill="#fcd56b" d="M0 3h22v15H0z" /><path fill="#3f93d8" d="M4 18v-7h14v7h-4v-3H8v3z" /></Svg></AppButton>
        <AppButton>
          <Svg s={24} vb="0 0 24 24">
            <defs><linearGradient id="edge"><stop offset="0" stopColor="#2aa6e6" /><stop offset="1" stopColor="#66e058" /></linearGradient></defs>
            <circle cx="12" cy="12" r="12" fill="#1272c8" />
            <path d="M0 11A12 12 0 0 1 24 11c0 4-3 6-6 6-3 0-4-1-3-3 2-5-3-7-7-6-4 0-7 2-8 3z" fill="url(#edge)" />
            <path d="M9 11c-3 4 0 11 7 11 3 0 5-1 6.500-3-4 1.500-8 .5-9.500-2s-.5-4 0-6q-2-1.500-4 0z" fill="#0c4a94" />
            <path d="M13 12q3-.5 2 2t3 3q4 0 6-4l1 4-2.500 3q-5 1-8-1.500T13 12z" fill="#242526" />
          </Svg>
        </AppButton>
        <AppButton><FbDisc><FaFacebookF size={17} /></FbDisc></AppButton>
        <AppButton><Svg s={24} h={18} vb="0 0 24 18"><rect width="24" height="17" y=".5" rx="3" fill="#f00" /><path d="M9.500 5.500v7l6-3.500z" fill="#fff" /></Svg></AppButton>
        <AppButton $open $front>
          <Svg s={27} h={27} vb="0 0 27 27">
            <circle cx="13" cy="13" r="12" fill="#fbc116" /><path d="M13 13L2.600 7A12 12 0 0 1 23.400 7z" fill="#e33b2e" /><path d="M13 13L2.600 7A12 12 0 0 0 13 25z" fill="#229a48" />
            <circle cx="13" cy="13" r="6" fill="#fff" /><circle cx="13" cy="13" r="4.7" fill="#2a72e8" />
            <circle cx="19" cy="19" r="7.5" fill="#f3edef" /><path d="M13 14q6-5 12 0" stroke="#cf7f98" strokeWidth="2" fill="none" /><path d="M15 20h8" stroke="#e9b4c1" />
          </Svg>
        </AppButton>
        <AppButton $open>
          <Svg s={24} vb="0 0 24 24">
            <path d="M1 15C1 7 9 3 16 5c5 2 6 8 3 12-3 5-8 5-10 3s1-4-1-5-7 2-7 0z" fill="#bfe0f0" />
            <circle cx="5" cy="12" r="1.9" fill="#e2453b" /><circle cx="8.500" cy="8.500" r="1.9" fill="#59b64b" /><circle cx="13.500" cy="7" r="2" fill="#f2bd2c" /><circle cx="11" cy="14" r="2" fill="#25333a" />
            <path d="M19 6l2 1-7 15-1.500 1 .5-2z" fill="#e8892c" /><path d="M18 1l5-1 1 2-3 6-3-2z" fill="#b98358" />
          </Svg>
        </AppButton>
      </Apps>
      <Tray>
        <Svg s={14} vb="0 0 14 14"><path d="M1 10l6-6 6 6" fill="none" stroke="#fff" strokeWidth="1.4" /></Svg>
        <Svg s={14} vb="0 0 14 14"><g fill="none" stroke="#ddd" strokeWidth="1.2"><path d="M1 13A12 12 0 0 1 13 2M4 13a9 9 0 0 1 9-8M7 13a6 6 0 0 1 6-5" /></g><circle cx="12" cy="12" r="1.5" fill="#fff" /></Svg>
        <Svg s={17} vb="0 0 17 16"><path d="M1 5.500h2.500L7 2v12l-3.500-3.500H1z" fill="none" stroke="#eee" strokeWidth="1.2" /><path d="M9 6q1.500 2 0 4M11.500 4.500q2.500 3.500 0 7M14 3q3.500 5 0 10" fill="none" stroke="#aaa" /></Svg>
        <Stack><Fit w={23}>POR</Fit><Fit w={26}>PTB2</Fit></Stack>
        <Stack><Fit w={26}>19:11</Fit><Fit w={58}>25/10/2023</Fit></Stack>
        <Svg s={35} h={30} vb="-9 0 35 30"><path d="M0 2h16v12h-6v4l-4-4H0z" fill="#fff" /><path d="M3 5.500h10M3 8.500h10M3 11.500h6" stroke="#242526" /><circle cx="15" cy="17" r="8" fill="#3a3b3c" stroke="#8d8d8d" /><text x="15" y="21.5" textAnchor="middle" fontSize="12" fill="#fff">1</text></Svg>
        <Desktop />
      </Tray>
    </Taskbar>
  );
}

export default function App() {
  return (
    <Screen>
      <GlobalStyle />
      <BrowserChrome />
      <Viewport>
        <Site>
          <Navbar>
            <HeaderArt />
            <FaBars size={16} />
            <EadLogo />
            <VLibras><Fit w={219}>Esse site pode ser lido com VLibras</Fit></VLibras>
            <UserMenu>
              <FaBell size={15} />
              <Svg s={36} h={16} vb="-18 0 36 16"><path d="M9 1.500c5 0 9 2.500 9 6s-4 6-9 6q-1.500 0-3-.3Q3.500 15 .8 15 3 13.500 3 12 0 10 0 7.500c0-3.500 4-6 9-6z" /></Svg>
              <UserName><Fit w={256}>Karla dos Santos Gomes 225624-6264BB</Fit></UserName>
              <Avatar />
              <Caret />
            </UserMenu>
          </Navbar>
          <Body><Side /><Main /></Body>
        </Site>
        <Scrollbar><Up /><Thumb $h={523} /><Down /></Scrollbar>
      </Viewport>
      <WindowsBar />
    </Screen>
  );
}
